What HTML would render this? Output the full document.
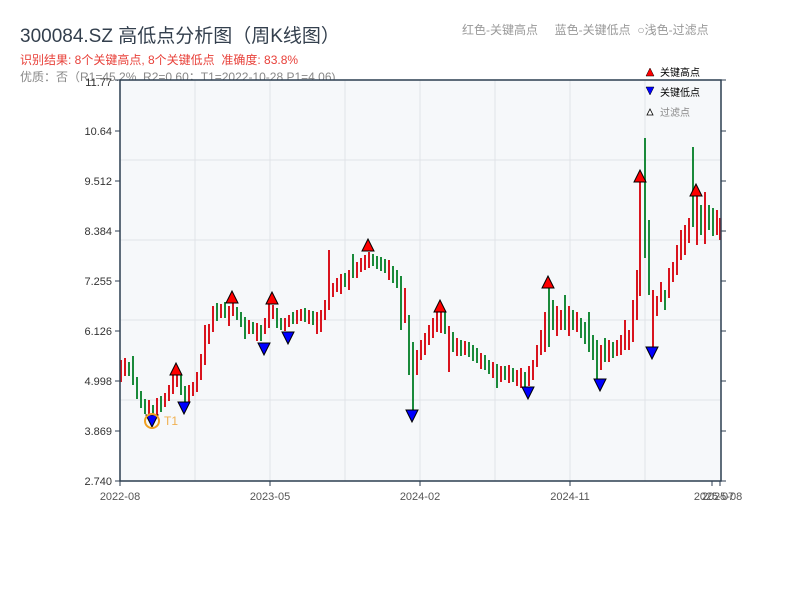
<!DOCTYPE html>
<html><head><meta charset="utf-8"><style>
body{margin:0;width:800px;height:600px;background:#fff;overflow:hidden;font-family:"Liberation Sans","Noto Sans CJK SC",sans-serif;}
.t{position:absolute;white-space:nowrap}
.r{fill:#d9141e}.g{fill:#1a8a3a}
.ax{font-size:11px;fill:#333;font-family:"Liberation Sans",sans-serif}
.bx{font-size:11px;fill:#555;font-family:"Liberation Sans",sans-serif}
</style></head><body>
<div class="t" style="left:20px;top:21px;font-size:19px;color:#333f4d">300084.SZ 高低点分析图（周K线图）</div>
<div class="t" style="left:20px;top:51px;font-size:12px;color:#e8413a">识别结果: 8个关键高点, 8个关键低点&nbsp;&nbsp;准确度: 83.8%</div>
<div class="t" style="left:20px;top:68px;font-size:12px;color:#888">优质：否（R1=45.2%, R2=0.60；T1=2022-10-28 P1=4.06)</div>
<div class="t" style="left:462px;top:21px;font-size:12px;color:#999">红色-关键高点&nbsp;&nbsp;&nbsp;&nbsp;&nbsp;蓝色-关键低点&nbsp;&nbsp;○浅色-过滤点</div>
<svg width="800" height="600" style="position:absolute;left:0;top:0" xmlns="http://www.w3.org/2000/svg">
<rect x="120" y="80" width="601" height="401" fill="#f6f8fa"/>
<g stroke="#e0e3e8">
<line x1="120" x2="721" y1="160" y2="160"/><line x1="120" x2="721" y1="240" y2="240"/><line x1="120" x2="721" y1="320" y2="320"/><line x1="120" x2="721" y1="400" y2="400"/>
<line y1="80" y2="481" x1="195" x2="195"/><line y1="80" y2="481" x1="270" x2="270"/><line y1="80" y2="481" x1="345" x2="345"/><line y1="80" y2="481" x1="420" x2="420"/><line y1="80" y2="481" x1="495" x2="495"/><line y1="80" y2="481" x1="570" x2="570"/><line y1="80" y2="481" x1="645" x2="645"/>
</g>
<g>
<rect class="r" x="120" y="360" width="2" height="22"/>
<rect class="r" x="124" y="358" width="2" height="18"/>
<rect class="g" x="128" y="362" width="2" height="14"/>
<rect class="g" x="132" y="356" width="2" height="29"/>
<rect class="g" x="136" y="377" width="2" height="22"/>
<rect class="g" x="140" y="391" width="2" height="17"/>
<rect class="g" x="144" y="399" width="2" height="15"/>
<rect class="r" x="148" y="400" width="2" height="17"/>
<rect class="g" x="152" y="405" width="2" height="13"/>
<rect class="r" x="156" y="398" width="2" height="18"/>
<rect class="g" x="160" y="396" width="2" height="16"/>
<rect class="r" x="164" y="393" width="2" height="14"/>
<rect class="r" x="168" y="385" width="2" height="16"/>
<rect class="r" x="172" y="372" width="2" height="22"/>
<rect class="r" x="176" y="374" width="2" height="13"/>
<rect class="g" x="180" y="374" width="2" height="21"/>
<rect class="g" x="184" y="386" width="2" height="17"/>
<rect class="r" x="188" y="385" width="2" height="18"/>
<rect class="r" x="192" y="382" width="2" height="14"/>
<rect class="r" x="196" y="372" width="2" height="20"/>
<rect class="r" x="200" y="354" width="2" height="26"/>
<rect class="r" x="204" y="325" width="2" height="40"/>
<rect class="r" x="208" y="324" width="2" height="20"/>
<rect class="r" x="212" y="306" width="2" height="26"/>
<rect class="g" x="216" y="303" width="2" height="18"/>
<rect class="r" x="220" y="304" width="2" height="14"/>
<rect class="g" x="224" y="302" width="2" height="16"/>
<rect class="r" x="228" y="306" width="2" height="20"/>
<rect class="r" x="232" y="300" width="2" height="16"/>
<rect class="g" x="236" y="307" width="2" height="13"/>
<rect class="g" x="240" y="312" width="2" height="15"/>
<rect class="g" x="244" y="317" width="2" height="22"/>
<rect class="r" x="248" y="320" width="2" height="14"/>
<rect class="g" x="252" y="322" width="2" height="12"/>
<rect class="r" x="256" y="323" width="2" height="18"/>
<rect class="g" x="260" y="325" width="2" height="16"/>
<rect class="r" x="264" y="318" width="2" height="16"/>
<rect class="r" x="268" y="302" width="2" height="26"/>
<rect class="r" x="272" y="305" width="2" height="14"/>
<rect class="g" x="276" y="308" width="2" height="20"/>
<rect class="g" x="280" y="318" width="2" height="12"/>
<rect class="r" x="284" y="318" width="2" height="13"/>
<rect class="r" x="288" y="315" width="2" height="12"/>
<rect class="g" x="292" y="312" width="2" height="12"/>
<rect class="r" x="296" y="310" width="2" height="14"/>
<rect class="r" x="300" y="309" width="2" height="12"/>
<rect class="g" x="304" y="308" width="2" height="14"/>
<rect class="r" x="308" y="310" width="2" height="14"/>
<rect class="g" x="312" y="311" width="2" height="14"/>
<rect class="r" x="316" y="312" width="2" height="22"/>
<rect class="r" x="320" y="310" width="2" height="22"/>
<rect class="r" x="324" y="300" width="2" height="20"/>
<rect class="r" x="328" y="250" width="2" height="60"/>
<rect class="r" x="332" y="283" width="2" height="14"/>
<rect class="r" x="336" y="278" width="2" height="14"/>
<rect class="r" x="340" y="274" width="2" height="20"/>
<rect class="g" x="344" y="273" width="2" height="14"/>
<rect class="r" x="348" y="270" width="2" height="20"/>
<rect class="g" x="352" y="254" width="2" height="24"/>
<rect class="r" x="356" y="262" width="2" height="16"/>
<rect class="r" x="360" y="258" width="2" height="14"/>
<rect class="r" x="364" y="255" width="2" height="15"/>
<rect class="r" x="368" y="252" width="2" height="16"/>
<rect class="g" x="372" y="254" width="2" height="12"/>
<rect class="g" x="376" y="256" width="2" height="13"/>
<rect class="g" x="380" y="257" width="2" height="14"/>
<rect class="g" x="384" y="259" width="2" height="14"/>
<rect class="r" x="388" y="260" width="2" height="20"/>
<rect class="g" x="392" y="266" width="2" height="17"/>
<rect class="g" x="396" y="270" width="2" height="18"/>
<rect class="g" x="400" y="276" width="2" height="54"/>
<rect class="r" x="404" y="288" width="2" height="35"/>
<rect class="g" x="408" y="315" width="2" height="60"/>
<rect class="g" x="412" y="342" width="2" height="75"/>
<rect class="r" x="416" y="350" width="2" height="25"/>
<rect class="r" x="420" y="340" width="2" height="20"/>
<rect class="r" x="424" y="333" width="2" height="22"/>
<rect class="r" x="428" y="325" width="2" height="20"/>
<rect class="r" x="432" y="318" width="2" height="20"/>
<rect class="r" x="436" y="310" width="2" height="22"/>
<rect class="r" x="440" y="308" width="2" height="25"/>
<rect class="g" x="444" y="312" width="2" height="22"/>
<rect class="r" x="448" y="326" width="2" height="46"/>
<rect class="g" x="452" y="332" width="2" height="20"/>
<rect class="r" x="456" y="338" width="2" height="18"/>
<rect class="g" x="460" y="340" width="2" height="16"/>
<rect class="r" x="464" y="341" width="2" height="14"/>
<rect class="g" x="468" y="342" width="2" height="15"/>
<rect class="g" x="472" y="345" width="2" height="16"/>
<rect class="g" x="476" y="348" width="2" height="15"/>
<rect class="r" x="480" y="353" width="2" height="16"/>
<rect class="g" x="484" y="355" width="2" height="15"/>
<rect class="g" x="488" y="360" width="2" height="14"/>
<rect class="r" x="492" y="362" width="2" height="16"/>
<rect class="g" x="496" y="364" width="2" height="24"/>
<rect class="r" x="500" y="366" width="2" height="16"/>
<rect class="g" x="504" y="366" width="2" height="14"/>
<rect class="r" x="508" y="365" width="2" height="18"/>
<rect class="g" x="512" y="368" width="2" height="14"/>
<rect class="r" x="516" y="370" width="2" height="16"/>
<rect class="r" x="520" y="368" width="2" height="20"/>
<rect class="g" x="524" y="372" width="2" height="16"/>
<rect class="r" x="528" y="366" width="2" height="20"/>
<rect class="r" x="532" y="360" width="2" height="20"/>
<rect class="r" x="536" y="345" width="2" height="22"/>
<rect class="r" x="540" y="330" width="2" height="25"/>
<rect class="r" x="544" y="312" width="2" height="40"/>
<rect class="g" x="548" y="285" width="2" height="62"/>
<rect class="g" x="552" y="300" width="2" height="30"/>
<rect class="r" x="556" y="306" width="2" height="30"/>
<rect class="r" x="560" y="310" width="2" height="20"/>
<rect class="g" x="564" y="295" width="2" height="35"/>
<rect class="r" x="568" y="306" width="2" height="30"/>
<rect class="g" x="572" y="310" width="2" height="20"/>
<rect class="r" x="576" y="312" width="2" height="20"/>
<rect class="g" x="580" y="318" width="2" height="20"/>
<rect class="g" x="584" y="322" width="2" height="22"/>
<rect class="g" x="588" y="312" width="2" height="40"/>
<rect class="g" x="592" y="335" width="2" height="25"/>
<rect class="g" x="596" y="340" width="2" height="40"/>
<rect class="r" x="600" y="345" width="2" height="25"/>
<rect class="g" x="604" y="338" width="2" height="24"/>
<rect class="r" x="608" y="340" width="2" height="22"/>
<rect class="g" x="612" y="342" width="2" height="16"/>
<rect class="r" x="616" y="340" width="2" height="16"/>
<rect class="r" x="620" y="335" width="2" height="20"/>
<rect class="r" x="624" y="320" width="2" height="30"/>
<rect class="r" x="628" y="330" width="2" height="20"/>
<rect class="r" x="632" y="300" width="2" height="42"/>
<rect class="r" x="636" y="270" width="2" height="50"/>
<rect class="r" x="639" y="176" width="2" height="120"/>
<rect class="g" x="644" y="138" width="2" height="120"/>
<rect class="g" x="648" y="220" width="2" height="75"/>
<rect class="r" x="652" y="290" width="2" height="60"/>
<rect class="r" x="656" y="296" width="2" height="20"/>
<rect class="r" x="660" y="282" width="2" height="20"/>
<rect class="g" x="664" y="290" width="2" height="20"/>
<rect class="r" x="668" y="268" width="2" height="30"/>
<rect class="r" x="672" y="262" width="2" height="20"/>
<rect class="r" x="676" y="245" width="2" height="30"/>
<rect class="r" x="680" y="230" width="2" height="30"/>
<rect class="r" x="684" y="225" width="2" height="30"/>
<rect class="r" x="688" y="218" width="2" height="25"/>
<rect class="g" x="692" y="147" width="2" height="80"/>
<rect class="r" x="696" y="195" width="2" height="50"/>
<rect class="g" x="700" y="205" width="2" height="30"/>
<rect class="r" x="704" y="192" width="2" height="52"/>
<rect class="g" x="708" y="205" width="2" height="25"/>
<rect class="g" x="712" y="208" width="2" height="28"/>
<rect class="r" x="716" y="210" width="2" height="25"/>
<rect class="r" x="719" y="218" width="2" height="22"/>
</g>
<g fill="#f00" stroke="#000">
<polygon points="170,375 182,375 176,363"/>
<polygon points="226,303 238,303 232,291"/>
<polygon points="266,304 278,304 272,292"/>
<polygon points="362,251 374,251 368,239"/>
<polygon points="434,312 446,312 440,300"/>
<polygon points="542,288 554,288 548,276"/>
<polygon points="634,182 646,182 640,170"/>
<polygon points="690,196 702,196 696,184"/>
</g>
<g fill="#00f" stroke="#000">
<polygon points="146,415 158,415 152,427"/>
<polygon points="178,402 190,402 184,414"/>
<polygon points="258,343 270,343 264,355"/>
<polygon points="282,332 294,332 288,344"/>
<polygon points="406,410 418,410 412,422"/>
<polygon points="522,387 534,387 528,399"/>
<polygon points="594,379 606,379 600,391"/>
<polygon points="646,347 658,347 652,359"/>
</g>
<circle cx="152" cy="421" r="7" fill="none" stroke="#f0a020" stroke-width="2"/>
<text x="164" y="425" font-size="12" fill="#f0b050" font-family="Liberation Sans">T1</text>
<path d="M120 80V481H721V80Z" fill="none" stroke="#2c3e50" stroke-width="1.5"/>
<g stroke="#2c3e50">
<line x1="115" x2="120" y1="80" y2="80"/><line x1="115" x2="120" y1="131" y2="131"/><line x1="115" x2="120" y1="181" y2="181"/><line x1="115" x2="120" y1="231" y2="231"/><line x1="115" x2="120" y1="281" y2="281"/><line x1="115" x2="120" y1="331" y2="331"/><line x1="115" x2="120" y1="381" y2="381"/><line x1="115" x2="120" y1="431" y2="431"/><line x1="115" x2="120" y1="481" y2="481"/>
<line x1="721" x2="726" y1="80" y2="80"/><line x1="721" x2="726" y1="131" y2="131"/><line x1="721" x2="726" y1="181" y2="181"/><line x1="721" x2="726" y1="231" y2="231"/><line x1="721" x2="726" y1="281" y2="281"/><line x1="721" x2="726" y1="331" y2="331"/><line x1="721" x2="726" y1="381" y2="381"/><line x1="721" x2="726" y1="431" y2="431"/><line x1="721" x2="726" y1="481" y2="481"/>
<line y1="481" y2="486" x1="120" x2="120"/><line y1="481" y2="486" x1="270" x2="270"/><line y1="481" y2="486" x1="420" x2="420"/><line y1="481" y2="486" x1="570" x2="570"/><line y1="481" y2="486" x1="712" x2="712"/><line y1="481" y2="486" x1="720" x2="720"/>
</g>
<g class="ax" text-anchor="end">
<text x="112" y="86">11.77</text><text x="112" y="135">10.64</text><text x="112" y="185">9.512</text><text x="112" y="235">8.384</text><text x="112" y="285">7.255</text><text x="112" y="335">6.126</text><text x="112" y="385">4.998</text><text x="112" y="435">3.869</text><text x="112" y="485">2.740</text>
</g>
<g class="bx" text-anchor="middle">
<text x="120" y="500">2022-08</text><text x="270" y="500">2023-05</text><text x="420" y="500">2024-02</text><text x="570" y="500">2024-11</text><text x="714" y="500">2025-07</text><text x="722" y="500">2025-08</text>
</g>
<polygon points="646,76 654,76 650,68" fill="#f00" stroke="#000" stroke-width=".5"/>
<text x="660" y="76" font-size="10" fill="#000" font-family="Noto Sans CJK SC">关键高点</text>
<polygon points="646,87 654,87 650,95" fill="#00f" stroke="#000" stroke-width=".5"/>
<text x="660" y="96" font-size="10" fill="#000" font-family="Noto Sans CJK SC">关键低点</text>
<polygon points="647,115 653,115 650,109" fill="#fff" stroke="#000" stroke-width=".8"/>
<text x="660" y="116" font-size="10" fill="#888" font-family="Noto Sans CJK SC">过滤点</text>
</svg>
</body></html>
